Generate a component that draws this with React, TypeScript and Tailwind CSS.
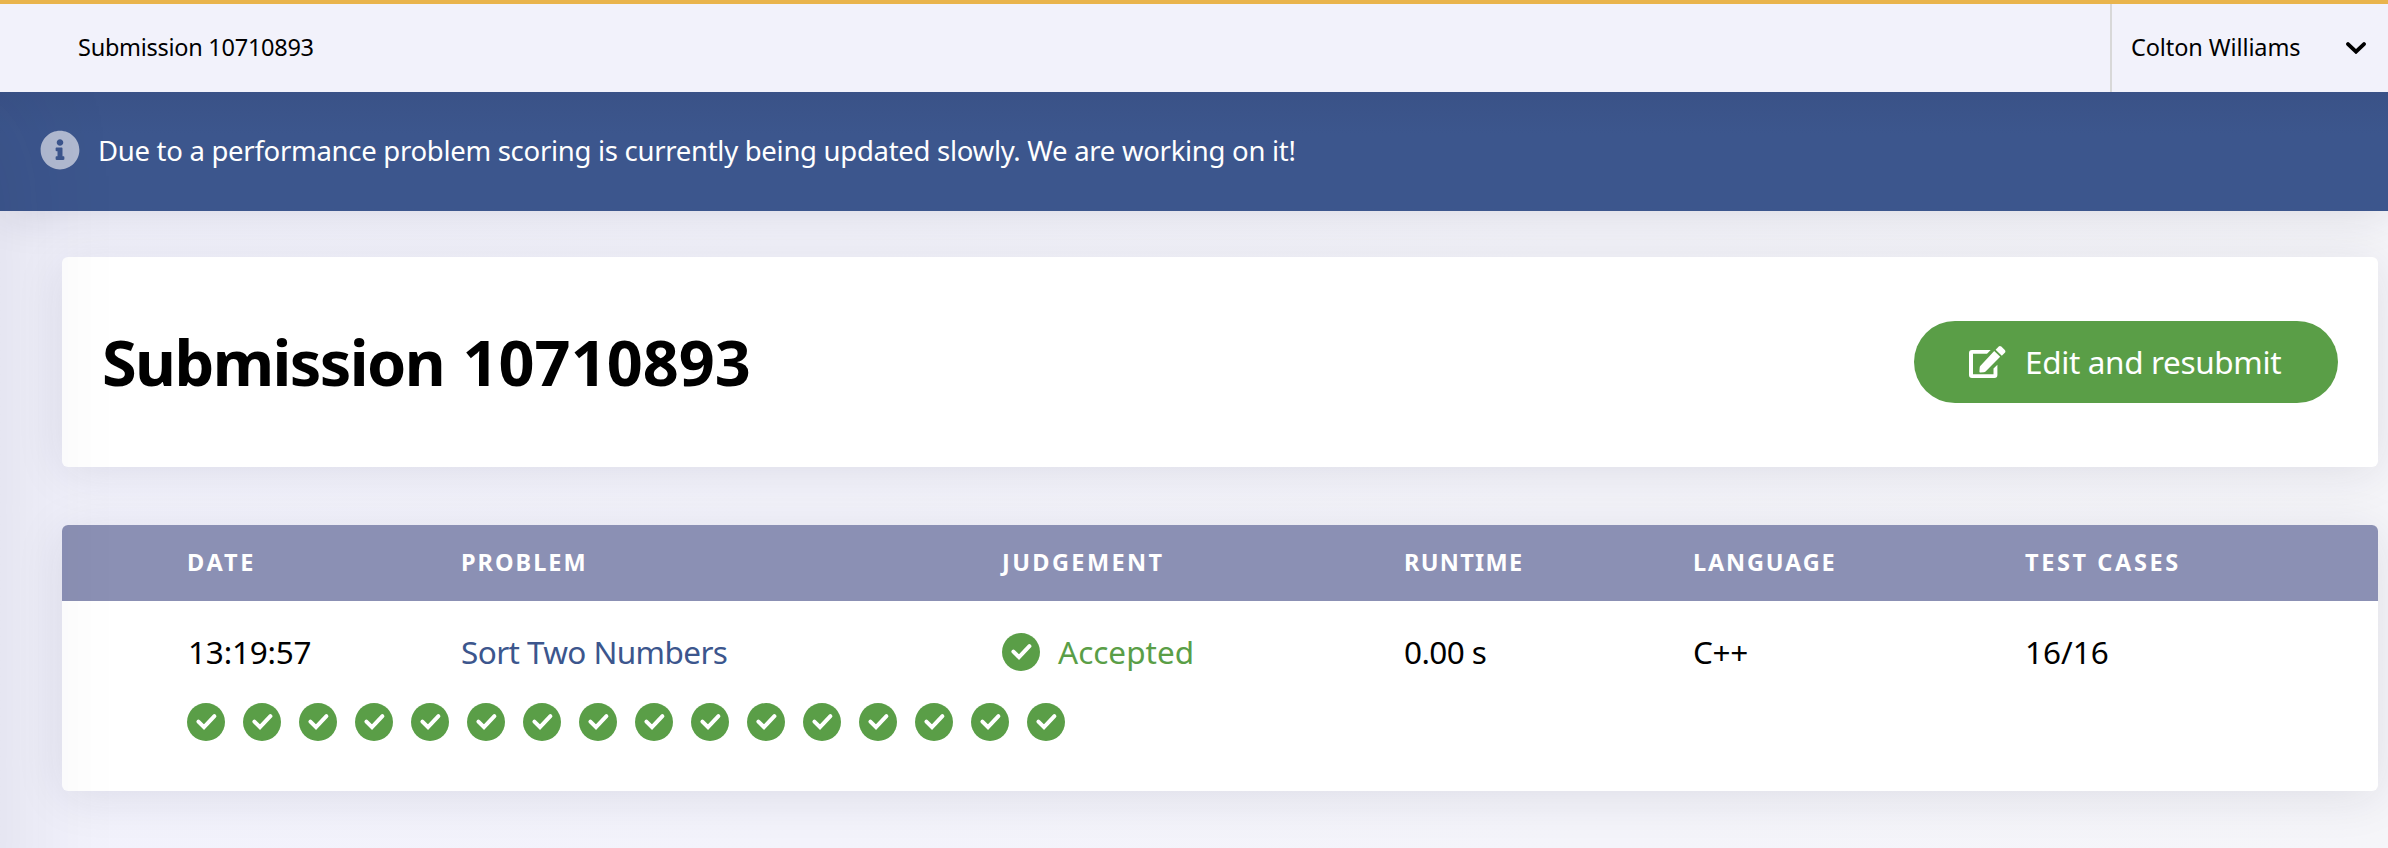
import { FaInfoCircle } from "react-icons/fa";

const CASES = Array.from({ length: 16 }, (_, i) => i);

const COLUMNS =
  "grid grid-cols-[274px_541px_402px_289px_332px_1fr] pl-[125px] items-center whitespace-nowrap";

function CheckIcon() {
  return (
    <svg viewBox="0 0 38 38" className="size-[38px] shrink-0" fill="none">
      <circle cx="19" cy="19" r="19" fill="currentColor" />
      <path d="M11.4 18.6 17 24.1 27.4 13.2" stroke="#fff" strokeWidth="4" strokeLinecap="round" />
    </svg>
  );
}

function ChevronIcon() {
  return (
    <svg viewBox="0 0 20 12" className="h-3 w-5" fill="none">
      <path d="M2 2.1 10 9.7 18 2.1" stroke="currentColor" strokeWidth="3.8" strokeLinecap="round" />
    </svg>
  );
}

function EditIcon() {
  return (
    <svg viewBox="0 0 37 32" className="h-8 w-[37px] shrink-0" fill="currentColor">
      <path d="M3 4H21.7L18 7.8H4V28.2H24.5V22.5L28.4 18.7V29a3 3 0 0 1-3 3H3a3 3 0 0 1-3-3V7a3 3 0 0 1 3-3Z" />
      <path d="M25.2 5 31.2 10.8 16.6 25.4Q15.8 26.1 14.8 26.2L11.3 26.4Q10.3 26.4 10.4 25.4L10.7 21.4Q10.8 20.4 11.5 19.7Z" />
      <path d="M26.6 3.7 29.5.7Q30.8-.5 32.3.6L35.8 4.1Q37 5.5 35.8 6.8L32.8 9.7Z" />
    </svg>
  );
}

function TopBar() {
  return (
    <header className="relative z-10 flex h-[92px] items-stretch justify-between border-t-4 border-[#e9b44c] bg-[#f2f2fb] text-[23.5px] text-black">
      <div className="flex items-center pl-[78px]">
        <span className="whitespace-nowrap tracking-[-0.27px]">Submission 10710893</span>
      </div>
      <div className="flex w-[278px] items-center justify-between border-l-2 border-[#d8d8d8] pl-[19px] pr-[22px]">
        <span className="whitespace-nowrap tracking-[-0.1px]">Colton Williams</span>
        <ChevronIcon />
      </div>
    </header>
  );
}

function Notice() {
  return (
    <section className="flex h-[119px] items-center gap-[18px] bg-[#3c568d] bg-linear-to-b from-[#3a5287] to-[#3c568d] to-35% pb-[3px] pl-10 text-[27.5px] text-white shadow-[0_0_48px_rgba(30,30,60,0.14)]">
      <FaInfoCircle className="size-10 shrink-0 text-[#b1bad1]" />
      <span className="whitespace-nowrap pt-0.5 tracking-[-0.285px]">
        Due to a performance problem scoring is currently being updated slowly. We are working on it!
      </span>
    </section>
  );
}

function TitleCard() {
  return (
    <section className="flex h-[210px] items-center justify-between rounded-md bg-white pl-10 pr-10 shadow-[0_6px_48px_rgba(30,30,60,0.1)]">
      <h1 className="whitespace-nowrap text-[63px] font-bold text-black">
        <span className="tracking-[-1.6px]">Submission</span>{" "}
        <span className="pl-0.5">10710893</span>
      </h1>
      <button className="flex h-[82px] w-[424px] items-center gap-[19px] rounded-full bg-[#5a9e47] pl-[55px] text-[31.5px] text-white">
        <EditIcon />
        <span className="whitespace-nowrap tracking-[-0.36px]">Edit and resubmit</span>
      </button>
    </section>
  );
}

function ResultTable() {
  return (
    <section className="mt-[58px] h-[266px] overflow-hidden rounded-md bg-white shadow-[0_6px_48px_rgba(30,30,60,0.1)]">
      <div className={`${COLUMNS} h-[76px] bg-[#8b90b4] text-[23.5px] font-bold text-white`}>
        <span className="tracking-[2.8px]">DATE</span>
        <span className="tracking-[2px]">PROBLEM</span>
        <span className="tracking-[2.4px]">JUDGEMENT</span>
        <span className="tracking-[1.3px]">RUNTIME</span>
        <span className="tracking-[1.8px]">LANGUAGE</span>
        <span className="tracking-[2.6px]">TEST CASES</span>
      </div>
      <div className={`${COLUMNS} h-[102px] text-[31.5px] text-black`}>
        <span className="pl-px tracking-[-0.2px]">13:19:57</span>
        <span className="tracking-[-0.6px] text-[#3c568d]">Sort Two Numbers</span>
        <span className="flex items-center gap-[18px] text-[#5a9e47]">
          <CheckIcon />
          <span>Accepted</span>
        </span>
        <span className="tracking-[-0.6px]">0.00 s</span>
        <span className="tracking-[-0.4px]">C++</span>
        <span>16/16</span>
      </div>
      <div className="flex gap-[18px] pl-[125px] text-[#5a9e47]">
        {CASES.map((i) => (
          <CheckIcon key={i} />
        ))}
      </div>
    </section>
  );
}

export default function App() {
  return (
    <div className="relative h-[848px] w-full overflow-hidden bg-linear-to-r from-[#f2f2fc] to-[#f5f5f9] font-['Noto_Sans',sans-serif]">
      <TopBar />
      <Notice />
      <main className="pl-[62px] pr-[10px] pt-[46px]">
        <TitleCard />
        <ResultTable />
      </main>
      <div className="pointer-events-none absolute -left-20 top-[92px] h-[900px] w-20 shadow-[0_0_120px_rgba(30,30,60,0.13)]" />
    </div>
  );
}
